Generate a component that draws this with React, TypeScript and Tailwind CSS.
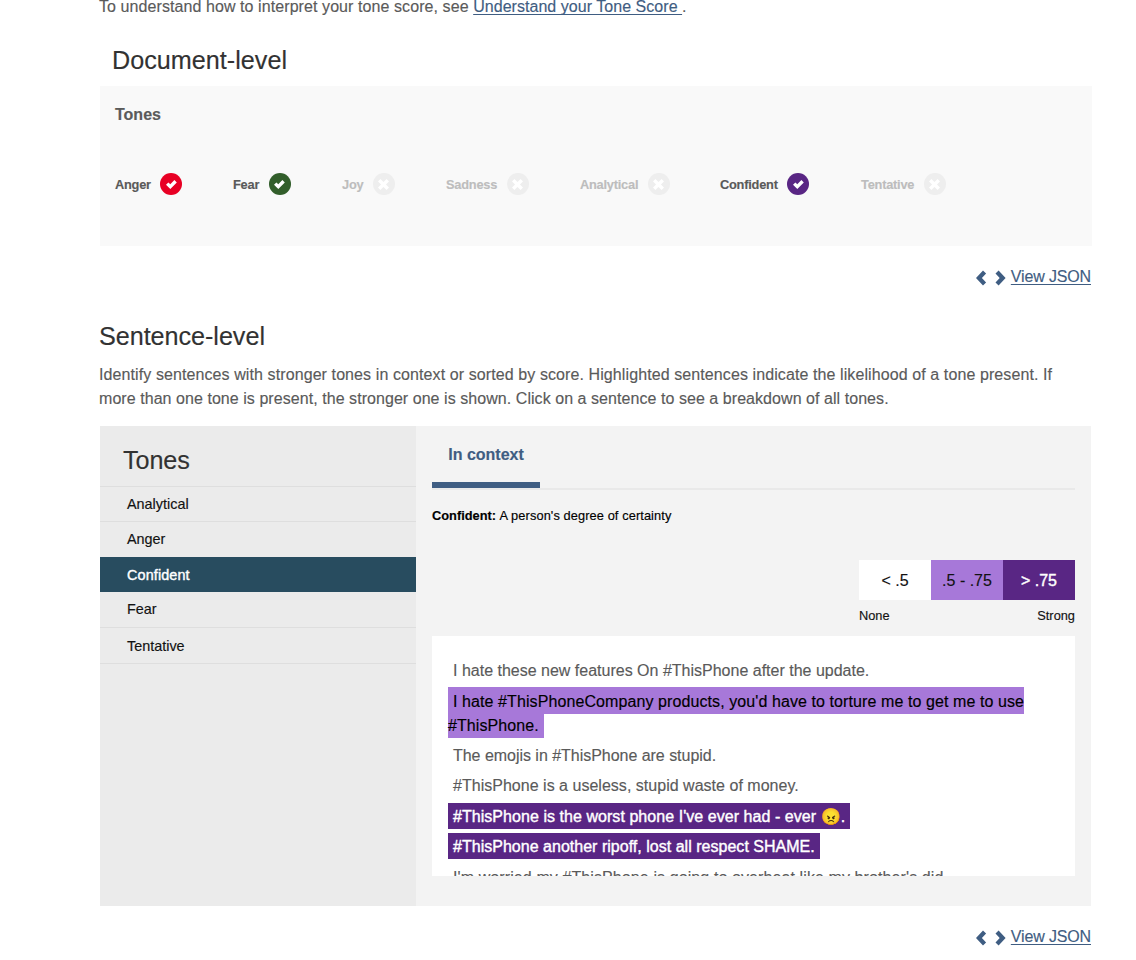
import React from "react";

type Tone = { name: string; cell: string; circle: string; on: boolean };

const documentTones: Tone[] = [
  { name: "Anger", cell: "w-[118px]", circle: "bg-[#e80024]", on: true },
  { name: "Fear", cell: "w-[109px]", circle: "bg-[#325e2b]", on: true },
  { name: "Joy", cell: "w-[104px]", circle: "bg-[#eeeeee]", on: false },
  { name: "Sadness", cell: "w-[134px]", circle: "bg-[#eeeeee]", on: false },
  { name: "Analytical", cell: "w-[140px]", circle: "bg-[#eeeeee]", on: false },
  { name: "Confident", cell: "w-[141px]", circle: "bg-[#592684]", on: true },
  { name: "Tentative", cell: "w-[137px]", circle: "bg-[#eeeeee]", on: false },
];

const sidebarTones = ["Analytical", "Anger", "Confident", "Fear", "Tentative"];

type Level = "none" | "medium" | "strong";

const sentences: { text: string; level: Level; tracking: string }[] = [
  {
    text: "I hate these new features On #ThisPhone after the update.",
    level: "none",
    tracking: "tracking-normal",
  },
  {
    text: "I hate #ThisPhoneCompany products, you'd have to torture me to get me to use #ThisPhone.",
    level: "medium",
    tracking: "tracking-[0.09px]",
  },
  { text: "The emojis in #ThisPhone are stupid.", level: "none", tracking: "tracking-[-0.03px]" },
  {
    text: "#ThisPhone is a useless, stupid waste of money.",
    level: "none",
    tracking: "tracking-[0.02px]",
  },
  {
    text: "#ThisPhone is the worst phone I've ever had - ever 😠.",
    level: "strong",
    tracking: "tracking-[0.05px]",
  },
  {
    text: "#ThisPhone another ripoff, lost all respect SHAME.",
    level: "strong",
    tracking: "tracking-[0.02px]",
  },
  {
    text: "I'm worried my #ThisPhone is going to overheat like my brother's did.",
    level: "none",
    tracking: "tracking-[0.1px]",
  },
];

const levelClass: Record<Level, string> = {
  none: "pt-[5px] text-[#5a5a5a]",
  medium: "bg-[#a778d9] pt-1.5 text-black",
  strong: "bg-[#592684] pt-[5px] text-white [-webkit-text-stroke:0.4px_white]",
};

const linkClass =
  "text-[#3f5d82] underline decoration-1 underline-offset-2 [text-decoration-skip-ink:none]";

function CheckMark() {
  return (
    <svg className="h-[9px] w-[11px]" viewBox="0 0 11 9" fill="currentColor">
      <path d="M0 4.8 2.4 2.4 4.3 4.2 8.4 0.1 10.8 2.4 4.3 8.9Z" />
    </svg>
  );
}

function CrossMark() {
  return (
    <svg
      className="size-[11px]"
      viewBox="0 0 11 11"
      fill="none"
      stroke="currentColor"
      strokeWidth="3.4"
    >
      <path d="M1.2 1.2 9.8 9.8M9.8 1.2 1.2 9.8" />
    </svg>
  );
}

function ViewJson() {
  return (
    <div className="flex h-6 items-center justify-end leading-6">
      <svg className="mt-0.5 mr-[5px] h-4 w-[30px]" viewBox="0 0 30 16" fill="#3f5d82">
        <path d="M7 0.4 10.1 3.5 5.9 8 10.1 12.5 7 15.6 0 8Z" />
        <path d="M22.6 0.4 19.5 3.5 23.7 8 19.5 12.5 22.6 15.6 29.6 8Z" />
      </svg>
      <a className={`tracking-[-0.15px] ${linkClass}`}>View JSON</a>
    </div>
  );
}

export default function App() {
  return (
    <div className="h-[960px] w-[1136px] overflow-hidden bg-white pl-[100px] font-['Liberation_Sans',Arial,sans-serif] text-base leading-6 text-[#5a5a5a] [-webkit-text-stroke-width:0.15px]">
      <div className="flex h-[19px] items-end">
        <p className="-ml-px shrink-0 whitespace-pre">
          <span className="tracking-[0.08px]">
            To understand how to interpret your tone score, see{" "}
          </span>
          <a className={`tracking-[0.04px] ${linkClass}`}>Understand your Tone Score </a>.
        </p>
      </div>

      <h2 className="mt-[23px] h-11 pl-3 text-[25.2px] leading-9 text-[#323232]">Document-level</h2>
      <section className="h-[160px] w-[992px] bg-[#f9f9f9] px-[15px] pt-[17px]">
        <h3 className="font-bold">Tones</h3>
        <ul className="mt-[46px] flex">
          {documentTones.map((t) => (
            <li
              key={t.name}
              className={`flex h-[22px] items-center gap-[9.5px] text-[12.8px] font-bold tracking-[-0.22px] ${t.cell} ${t.on ? "text-[#5a5a5a]" : "text-[#bdbdbd]"}`}
            >
              <span className="pt-0.5">{t.name}</span>
              <span
                className={`flex size-[22px] shrink-0 items-center justify-center rounded-full text-white ${t.circle}`}
              >
                {t.on ? <CheckMark /> : <CrossMark />}
              </span>
            </li>
          ))}
        </ul>
      </section>

      <div className="w-[991px] pt-[19px]">
        <ViewJson />
      </div>

      <h2 className="mt-[29px] -ml-px text-[25.2px] leading-9 tracking-[-0.05px] text-[#323232]">
        Sentence-level
      </h2>
      <p className="mt-[9px] -ml-px w-[991px]">
        <span className="tracking-[0.095px]">
          Identify sentences with stronger tones in context or sorted by score. Highlighted
          sentences indicate the likelihood of a tone present. If
        </span>
        <br />
        <span className="tracking-[0.055px]">
          more than one tone is present, the stronger one is shown. Click on a sentence to see a
          breakdown of all tones.
        </span>
      </p>

      <section className="mt-[15px] flex h-[480px] w-[991px] bg-[#f3f3f3]">
        <aside className="w-[316px] bg-[#ebebeb] pt-4">
          <h2 className="h-11 pl-[23px] text-[25.2px] leading-9 tracking-[-0.1px] text-[#323232]">
            Tones
          </h2>
          <ul className="border-t border-[#dedede]">
            {sidebarTones.map((name) => (
              <li
                key={name}
                className={`h-[35.4px] border-b pl-[27px] text-[14.4px] leading-[35px] last:h-[36.4px] last:leading-[37px] ${
                  name === "Confident"
                    ? "-mt-px border-[#284c5f] bg-[#284c5f] pt-px tracking-[0.12px] text-white [-webkit-text-stroke:0.4px_white]"
                    : "border-[#dedede] text-[#121212]"
                }`}
              >
                {name}
              </li>
            ))}
          </ul>
        </aside>

        <div className="w-[675px] px-4">
          <div className="flex h-16 items-start border-b-2 border-[#e9e9e9]">
            <div className="h-[62px] w-[108px] border-b-6 border-[#3f5d82] pt-[17px] text-center font-bold text-[#3f5d82]">
              In context
            </div>
          </div>
          <p className="mt-4 text-[12.8px] leading-5 text-black">
            <b>Confident:</b> <span className="tracking-[0.1px]">A person's degree of certainty</span>
          </p>
          <div className="mt-[34px] ml-auto w-[216px] text-[12.8px] text-[#121212]">
            <div className="flex h-10 text-center text-base leading-[42px]">
              <div className="w-[72px] bg-white">&lt; .5</div>
              <div className="w-[72px] bg-[#a778d9]">.5 - .75</div>
              <div className="w-[72px] bg-[#592684] text-white [-webkit-text-stroke:0.4px_white]">
                &gt; .75
              </div>
            </div>
            <div className="flex justify-between pt-1.5 leading-5">
              <span>None</span>
              <span>Strong</span>
            </div>
          </div>
          <div className="mt-2.5 h-60 overflow-hidden bg-white px-4 pt-[23.3px]">
            {sentences.map((s) => (
              <div key={s.text} className="mb-[6.4px] leading-6">
                <span className={`px-[5px] pb-1 ${s.tracking} ${levelClass[s.level]}`}>
                  {s.text}
                </span>
              </div>
            ))}
          </div>
        </div>
      </section>

      <div className="w-[991px] pt-[19px]">
        <ViewJson />
      </div>
    </div>
  );
}
